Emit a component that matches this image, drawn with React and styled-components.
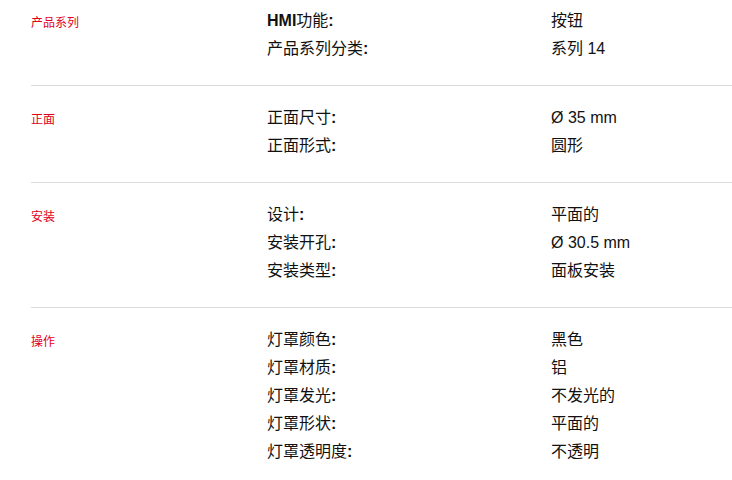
import React from "react";
import styled, { createGlobalStyle } from "styled-components";

const Global = createGlobalStyle`
  html, body { margin: 0; padding: 0; background: #fff; }
  body { font-family: "Liberation Sans", "Noto Sans CJK SC", sans-serif; color: #111; }
`;

const Page = styled.div`
  width: 732px;
  padding-left: 31px;
  box-sizing: border-box;
`;

const Section = styled.section`
  display: grid;
  grid-template-columns: 236px 284px 1fr;
  padding: ${(p) => (p.$first ? "7px" : "18px")} 0 22px;
  border-bottom: ${(p) => (p.$last ? "none" : "1px solid #dcdcdc")};
`;

const Category = styled.div`
  grid-row: 1 / span 10;
  font-size: 12px;
  line-height: 28px;
  color: #e2001a;
  padding-top: 2px;
`;

const Label = styled.div`
  grid-column: 2;
  font-size: 16px;
  line-height: 28px;
  color: #111;
`;

const Value = styled.div`
  grid-column: 3;
  font-size: 16px;
  line-height: 28px;
  color: #111;
`;

const B = styled.b`
  font-weight: 700;
`;

const data = [
  {
    cat: "产品系列",
    rows: [
      [<><B>HMI</B>功能</>, "按钮"],
      ["产品系列分类", "系列 14"],
    ],
  },
  {
    cat: "正面",
    rows: [
      ["正面尺寸", "Ø 35 mm"],
      ["正面形式", "圆形"],
    ],
  },
  {
    cat: "安装",
    rows: [
      ["设计", "平面的"],
      ["安装开孔", "Ø 30.5 mm"],
      ["安装类型", "面板安装"],
    ],
  },
  {
    cat: "操作",
    rows: [
      ["灯罩颜色", "黑色"],
      ["灯罩材质", "铝"],
      ["灯罩发光", "不发光的"],
      ["灯罩形状", "平面的"],
      ["灯罩透明度", "不透明"],
    ],
  },
];

export default function App() {
  return (
    <>
      <Global />
      <Page>
        {data.map((s, i) => (
          <Section key={i} $first={i === 0} $last={i === data.length - 1}>
            <Category>{s.cat}</Category>
            {s.rows.map(([l, v], j) => (
              <React.Fragment key={j}>
                <Label>
                  {l}
                  <B>:</B>
                </Label>
                <Value>{v}</Value>
              </React.Fragment>
            ))}
          </Section>
        ))}
      </Page>
    </>
  );
}
